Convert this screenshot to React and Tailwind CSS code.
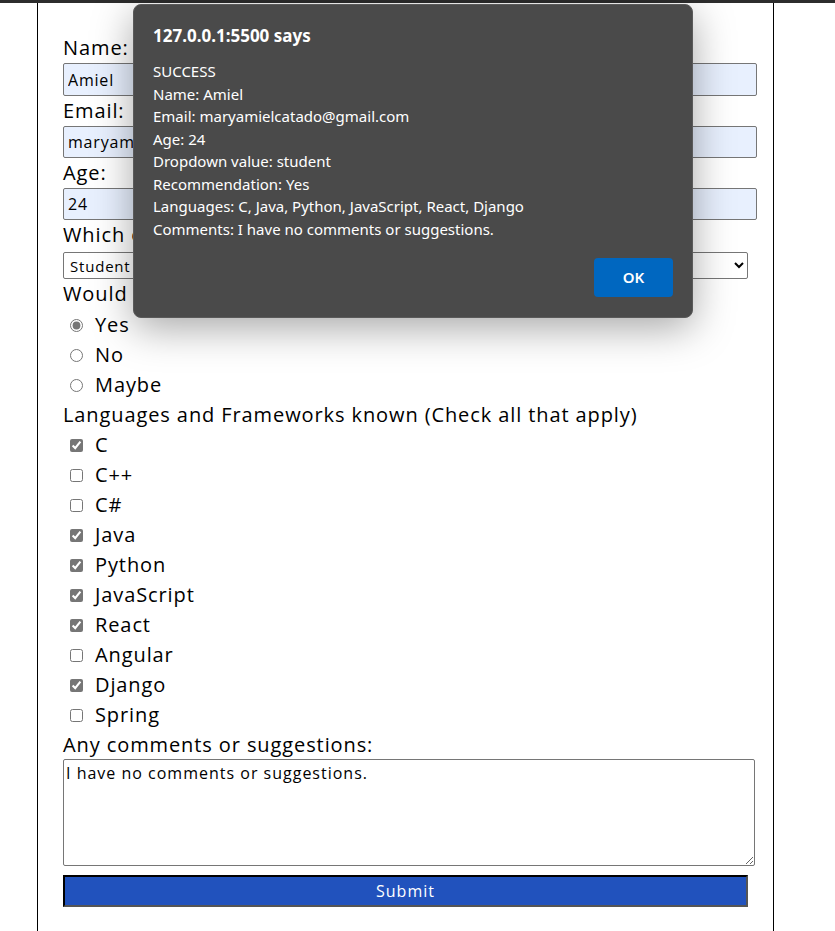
import React from "react";

const languages = [
  { name: "C", checked: true },
  { name: "C++", checked: false },
  { name: "C#", checked: false },
  { name: "Java", checked: true },
  { name: "Python", checked: true },
  { name: "JavaScript", checked: true },
  { name: "React", checked: true },
  { name: "Angular", checked: false },
  { name: "Django", checked: true },
  { name: "Spring", checked: false },
];

const alertLines = [
  "SUCCESS",
  "Name: Amiel",
  "Email: maryamielcatado@gmail.com",
  "Age: 24",
  "Dropdown value: student",
  "Recommendation: Yes",
  "Languages: C, Java, Python, JavaScript, React, Django",
  "Comments: I have no comments or suggestions.",
];

function App() {
  return (
    <div className="relative min-h-[931px] bg-white text-black font-['Open_Sans',sans-serif]">
      <div className="h-[3px] bg-[#2d2d2d]" />

      {/* Survey form */}
      <div className="ml-[37px] w-[737px] min-h-[928px] border-x border-black pl-[25px] pt-[30px]">
        <form className="flex flex-col text-[20px] leading-[30px] tracking-[0.9px]">
          <label>Name:</label>
          <input
            type="text"
            defaultValue="Amiel"
            className="w-[694px] h-[33px] border border-[#767676] rounded-[2px] bg-[#e8f0fe] px-[4px] text-[16px] tracking-[0.8px]"
          />
          <label>Email:</label>
          <input
            type="email"
            defaultValue="maryamielcatado@gmail.com"
            className="w-[694px] h-[32px] border border-[#767676] rounded-[2px] bg-[#e8f0fe] px-[4px] text-[16px] tracking-[0.8px]"
          />
          <label>Age:</label>
          <input
            type="number"
            defaultValue="24"
            className="w-[694px] h-[32px] border border-[#767676] rounded-[2px] bg-[#e8f0fe] px-[4px] text-[16px] tracking-[0.8px]"
          />
          <label>Which of the following best describes you?</label>
          <select
            defaultValue="student"
            className="mt-[2px] w-[685px] h-[27px] border border-[#767676] rounded-[2px] bg-white px-[2px] text-[15px] leading-[24px] tracking-[0.8px]"
          >
            <option value="student">Student</option>
            <option value="professional">Professional</option>
            <option value="other">Other</option>
          </select>
          <label>Would you recommend this survey to a friend?</label>
          {["Yes", "No", "Maybe"].map((opt) => (
            <label key={opt} className="flex items-center h-[30px] pt-[2px]">
              <input
                type="radio"
                name="recommend"
                defaultChecked={opt === "Yes"}
                className="ml-[7px] mr-[12px] w-[13px] h-[13px] accent-[#767676]"
              />
              {opt}
            </label>
          ))}
          <label className="h-[30px] pt-[1px]">Languages and Frameworks known (Check all that apply)</label>
          {languages.map((lang) => (
            <label key={lang.name} className="flex items-center h-[30px] pt-[2px]">
              <input
                type="checkbox"
                defaultChecked={lang.checked}
                className="ml-[7px] mr-[12px] w-[13px] h-[13px] accent-[#767676]"
              />
              {lang.name}
            </label>
          ))}
          <label className="h-[30px] pt-[1px]">Any comments or suggestions:</label>
          <textarea
            defaultValue="I have no comments or suggestions."
            className="w-[692px] h-[107px] border border-[#767676] rounded-[2px] px-[2px] py-[2px] text-[16px] leading-[22px] tracking-[1px]"
          />
          <button
            type="button"
            className="mt-[9px] w-[685px] h-[32px] bg-[#2152bd] border-2 border-t-black border-l-black border-b-[#555] border-r-[#555] text-white text-[16px] leading-[26px] tracking-[1px]"
          >
            Submit
          </button>
        </form>
      </div>

      {/* Alert dialog */}
      <div className="absolute left-[133px] top-[4px] w-[560px] h-[314px] rounded-[8px] bg-[#4a4a4a] border border-[#5a5a5a] shadow-[0_10px_40px_rgba(0,0,0,0.35)] px-[19px] pt-[19px] font-['Noto_Sans',sans-serif] text-white">
        <div className="text-[17px] leading-[24px] font-bold">127.0.0.1:5500 says</div>
        <div className="mt-[12px] text-[15px] leading-[22.5px]">
          {alertLines.map((line) => (
            <div key={line}>{line}</div>
          ))}
        </div>
        <div className="mt-[18px] flex justify-end">
          <button className="w-[79px] h-[39px] rounded-[4px] bg-[#0067c0] text-[15px] font-semibold text-white">
            OK
          </button>
        </div>
      </div>
    </div>
  );
}

export default App;
